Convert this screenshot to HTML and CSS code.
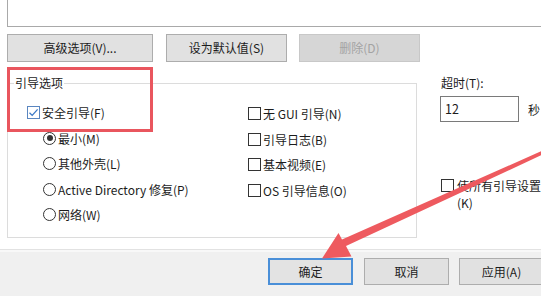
FILE: index.html
```html
<!DOCTYPE html>
<html lang="zh-CN">
<head>
<meta charset="utf-8">
<title>系统配置 - 引导</title>
<link rel="stylesheet" href="styles.css">
</head>
<body>
<div class="page">
  <div class="top">
    <div class="listbox"></div>
  </div>
  <div class="btnrow">
    <button class="btn w146">高级选项(V)...</button>
    <button class="btn w121 ml13">设为默认值(S)</button>
    <button class="btn w121 ml12 disabled">删除(D)</button>
  </div>
  <div class="main">
    <fieldset class="group">
      <legend class="legend">引导选项</legend>
      <div class="grid">
        <div class="col-left">
          <div class="row"><span class="cb checked"><svg viewBox="0 0 13 13" width="13" height="13"><path d="M2.5 6.8 L5.2 9.4 L10.6 3.4" fill="none" stroke="#3b78c6" stroke-width="1.3"/></svg></span><span>安全引导(F)</span></div>
          <div class="row ind"><span class="rb on"></span><span>最小(M)</span></div>
          <div class="row ind"><span class="rb"></span><span>其他外壳(L)</span></div>
          <div class="row ind"><span class="rb"></span><span>Active Directory 修复(P)</span></div>
          <div class="row ind"><span class="rb"></span><span>网络(W)</span></div>
        </div>
        <div class="col-right">
          <div class="row"><span class="cb"></span><span>无 GUI 引导(N)</span></div>
          <div class="row"><span class="cb"></span><span>引导日志(B)</span></div>
          <div class="row"><span class="cb"></span><span>基本视频(E)</span></div>
          <div class="row"><span class="cb"></span><span>OS 引导信息(O)</span></div>
        </div>
      </div>
    </fieldset>
    <div class="side">
      <div class="lbl">超时(T):</div>
      <div class="timeout">
        <div class="input">12</div>
        <span class="unit">秒</span>
      </div>
      <div class="perm">
        <span class="cb"></span>
        <div class="permtext"><div>使所有引导设置</div><div>(K)</div></div>
      </div>
    </div>
  </div>
  <div class="footer">
    <button class="btn fbtn default">确定</button>
    <button class="btn fbtn ml11">取消</button>
    <button class="btn fbtn ml10">应用(A)</button>
  </div>
  <div class="highlight"></div>
  <svg class="arrow" width="541" height="296" viewBox="0 0 541 296">
    <polygon points="545,149.5 545,153.5 346,246 351.5,256.5 322,258.5 338.5,233 342,239.5" fill="#ee5a5f"/>
  </svg>
</div>
</body>
</html>
```
FILE: styles.css
```css
* { box-sizing: border-box; }
html, body { margin: 0; padding: 0; background: #fff; }
body {
  font-family: "Noto Sans CJK SC", "Noto Sans", sans-serif;
  font-size: 12px;
  color: #1c1c1c;
}
.page {
  position: relative;
  width: 541px;
  height: 296px;
  overflow: hidden;
}
.top { height: 27px; }
.listbox {
  height: 27px;
  margin-left: 7px;
  margin-right: -10px;
  border-left: 1px solid #a9a9a9;
  border-bottom: 1px solid #a9a9a9;
}
.btnrow {
  display: flex;
  padding-left: 7px;
  margin-top: 7px;
}
.btn {
  font-family: inherit;
  font-size: 12px;
  color: #1c1c1c;
  height: 28px;
  padding: 0;
  background: #e1e1e1;
  border: 1px solid #adadad;
  border-radius: 0;
  line-height: 26px;
}
.w146 { width: 146px; }
.w121 { width: 121px; }
.ml13 { margin-left: 13px; }
.ml12 { margin-left: 12px; }
.ml11 { margin-left: 11px; }
.ml10 { margin-left: 10px; }
.btn.disabled {
  background: #d6d6d6;
  border-color: #c8c8c8;
  color: #a3a3a3;
}
.main {
  display: flex;
  margin-top: 13px;
}
.group {
  margin: 0 0 0 7px;
  width: 413px;
  height: 163px;
  padding: 0;
  border: 1px solid #dcdcdc;
}
.legend {
  margin-left: 6px;
  padding: 0 1px;
  line-height: 16px;
}
.grid {
  display: grid;
  grid-template-columns: 240px 1fr;
  padding-top: 9px;
}
.col-left { padding-left: 19px; }
.col-right { padding-top: 1px; }
.row {
  display: flex;
  align-items: center;
  height: 25.5px;
  white-space: nowrap;
}
.row.ind { padding-left: 16px; }
.cb {
  display: inline-block;
  width: 13px;
  height: 13px;
  border: 1px solid #333;
  background: #fff;
  margin-right: 2px;
  flex: none;
  position: relative;
}
.cb.checked { border-color: #5a86c0; }
.cb svg { position: absolute; left: -1px; top: -1px; }
.rb {
  display: inline-block;
  width: 13px;
  height: 13px;
  border: 1px solid #333;
  border-radius: 50%;
  background: #fff;
  margin-right: 2px;
  flex: none;
  position: relative;
}
.rb.on::after {
  content: "";
  position: absolute;
  left: 2.5px;
  top: 2.5px;
  width: 6px;
  height: 6px;
  border-radius: 50%;
  background: #333;
}
.side {
  margin-left: 23px;
  display: flex;
  flex-direction: column;
}
.lbl {
  line-height: 16px;
  padding-left: 1px;
}
.timeout {
  display: flex;
  align-items: center;
  margin-top: 5px;
}
.input {
  width: 79px;
  height: 26px;
  border: 1px solid #7a7a7a;
  line-height: 24px;
  padding-left: 4px;
  font-size: 12.5px;
}
.unit { margin-left: 9px; white-space: nowrap; }
.perm {
  display: flex;
  align-items: flex-start;
  margin-top: 55px;
  padding-left: 1px;
}
.perm .cb { margin-top: 2px; margin-right: 3px; }
.permtext { line-height: 17px; white-space: nowrap; }
.footer {
  margin-top: 11px;
  height: 60px;
  background: #f0f0f0;
  border-top: 1px solid #e2e2e2;
  box-shadow: inset 0 2px 0 #f8f8f8;
  display: flex;
  padding-left: 268px;
  padding-top: 8px;
}
.fbtn {
  width: 85px;
  height: 27px;
  line-height: 25px;
  flex: none;
}
.fbtn.default {
  border: 2px solid #4a8fd8;
  line-height: 23px;
  background: #e3e3e3;
}
.highlight {
  position: absolute;
  left: 7px;
  top: 67px;
  width: 146px;
  height: 65px;
  border: 3px solid #e9565e;
}
.arrow {
  position: absolute;
  left: 0;
  top: 0;
  pointer-events: none;
}
```
